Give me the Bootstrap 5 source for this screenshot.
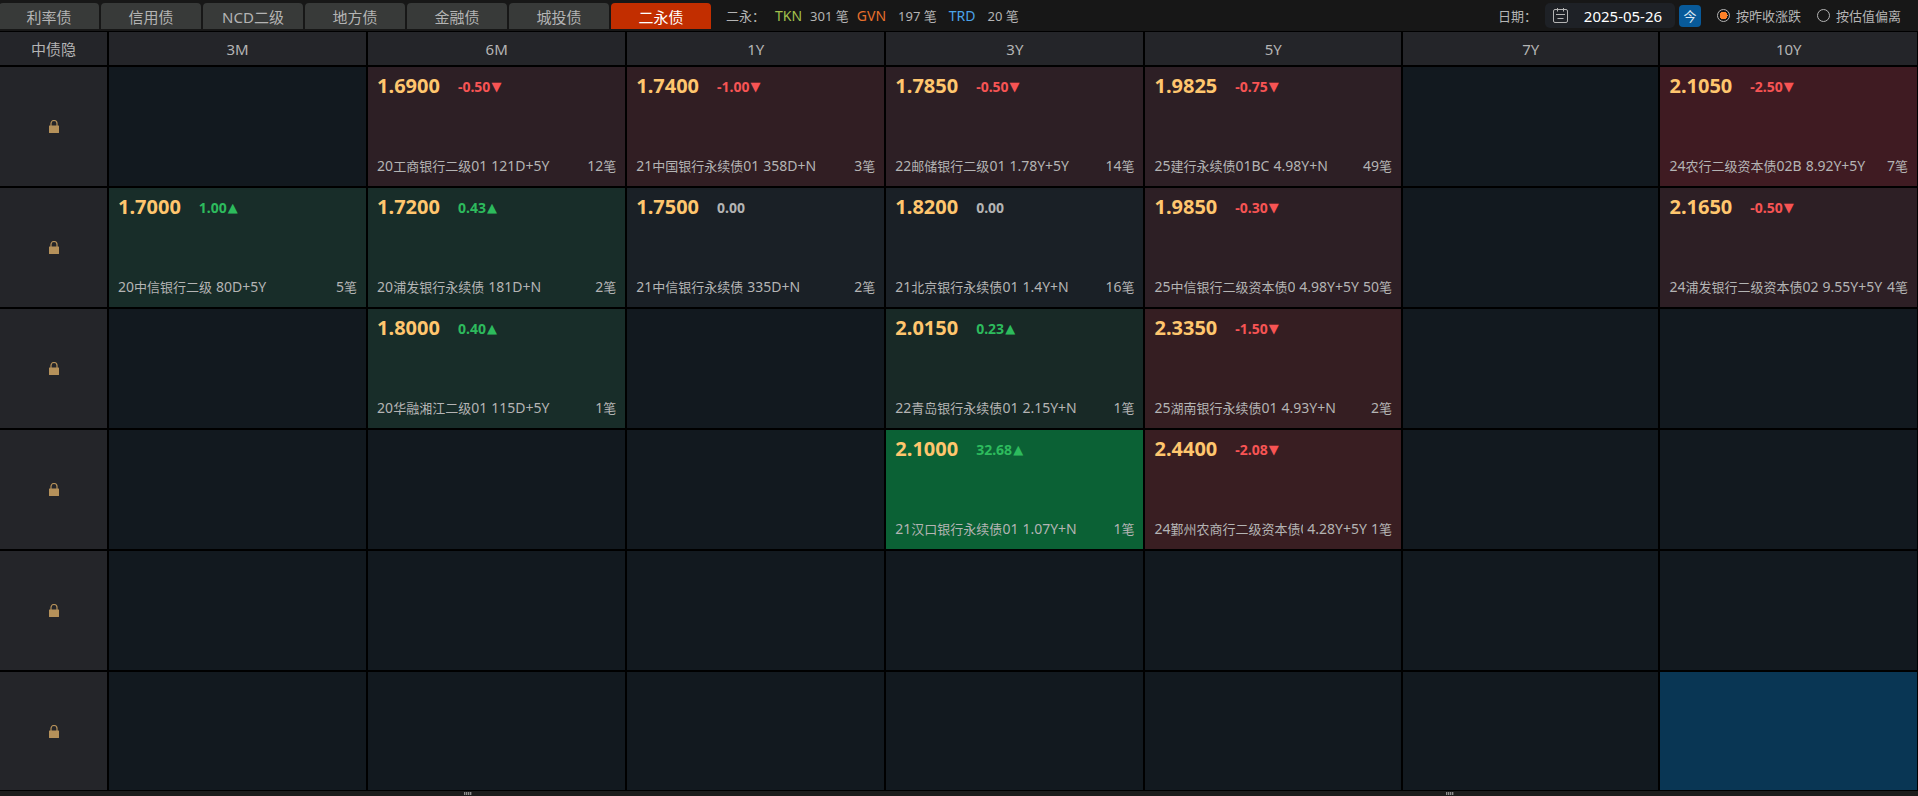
<!DOCTYPE html>
<html lang="zh-CN" data-bs-theme="dark">
<head>
<meta charset="utf-8">
<meta name="viewport" content="width=device-width, initial-scale=1">
<title>二永债</title>
<link href="https://cdn.jsdelivr.net/npm/bootstrap@5.3.0/dist/css/bootstrap.min.css" rel="stylesheet">
<style>
  body { background: #1c1c1c; color: #b4b4b4; font-family: "Noto Sans", "Noto Sans CJK SC", sans-serif; font-size: 13px; line-height: 20px; }
  .topbar { background: #171717; border-bottom: 1px solid #000; height: 32px; padding-right: 17px; }
  .market-tabs { gap: 2px; padding-top: 3px; margin-left: -1px; }
  .market-tabs .nav-link { width: 100px; height: 26px; padding: 2px 0 0; border: 0; border-radius: 4px 4px 0 0; background: #383a39; color: #b4b4b4; font-size: 15px; line-height: 24px; text-align: center; }
  .market-tabs .nav-link.active { background: #c22e00; color: #fff; }
  .stats { margin-left: 15px; }
  .stats-title { margin-right: 10px; }
  .tkn, .gvn, .trd { font-size: 14px; }
  .tkn { color: #a3c04c; } .gvn { color: #e8702c; } .trd { color: #4ba3e8; }
  .date-box { width: 130px; height: 25px; background: #1e2126; border-radius: 5px; padding: 0 8px; }
  .date-box input { width: 88px; border: 0; background: none; color: #fff; font-size: 15px; line-height: 20px; text-align: center; padding: 0; outline: 0; }
  .today { width: 22px; height: 22px; padding: 0; border: 0; border-radius: 4px; background: #085a9a; color: #dce8f2; font-size: 13px; line-height: 22px; }
  .mode { appearance: none; width: 13px; height: 13px; margin: 0 6px 0 0; border: 1px solid #b4b4b4; border-radius: 50%; }
  .mode:checked { background: radial-gradient(circle, #ff8228 0 4px, transparent 4px); }

  .matrix { table-layout: fixed; width: 100%; border-collapse: separate; border-spacing: 0; }
  .matrix th, .matrix td { padding: 0; border: 0 solid #000; border-width: 0 2px 2px 0; background: #12191f; }
  .matrix tr > :last-child { border-right-width: 1px; }
  .matrix thead th { background: #242529; height: 35px; font-size: 15px; font-weight: 400; text-align: center; }
  .matrix tbody th { background: #242529; }
  .first-col { width: 109px; }
  .near-col { width: 13.51%; }
  .tile { height: 119px; padding: 7px 9px 10px; }
  .matrix tbody tr:last-child .tile { height: 118px; }
  .matrix tbody tr:last-child > * { border-bottom-width: 1px; }
  .price { color: #ffc66e; font-size: 20px; line-height: 24px; font-weight: 700; margin-right: 18px; }
  .delta { font-size: 14px; line-height: 26px; font-weight: 700; }
  .arrow { font-family: "DejaVu Sans", sans-serif; font-size: 13px; font-weight: 400; line-height: 12px; margin-left: 1px; vertical-align: 1px; }
  .up { color: #2dbb5d; } .down { color: #f75454; }
  .deal { font-size: 14px; line-height: 20px; gap: 4px; }
  .zh { font-size: 13px; }
  .bond { min-width: 0; overflow: hidden; }
  .matrix .r1 { background: #2d1f25; } .matrix .r2 { background: #311e23; } .matrix .r3 { background: #351e22; }
  .matrix .r4 { background: #391e22; } .matrix .r5 { background: #3f1b22; }
  .matrix .g1 { background: #182926; } .matrix .g2 { background: #182d29; } .matrix .g9 { background: #0b6135; }
  .matrix .flat { background: #1a2026; } .matrix .picked { background: #093654; }
  .splitter { height: 5px; padding: 1px 24.2% 0; }
  .grip { width: 8px; height: 3px; background: repeating-linear-gradient(90deg, #8c8c8c 0 1px, #444 1px 2px); }
</style>
</head>
<body>
<header class="topbar d-flex align-items-stretch justify-content-between">
  <div class="d-flex">
    <nav class="nav market-tabs flex-nowrap">
      <button class="nav-link" type="button">利率债</button>
      <button class="nav-link" type="button">信用债</button>
      <button class="nav-link" type="button">NCD二级</button>
      <button class="nav-link" type="button">地方债</button>
      <button class="nav-link" type="button">金融债</button>
      <button class="nav-link" type="button">城投债</button>
      <button class="nav-link active" type="button">二永债</button>
    </nav>
    <div class="stats d-flex align-items-center text-nowrap">
      <span class="stats-title">二永：</span>
      <span class="tkn me-2">TKN</span><span class="me-2">301 笔</span>
      <span class="gvn me-2">GVN</span><span class="ms-1 me-2">197 笔</span>
      <span class="trd ms-1 me-2">TRD</span><span class="ms-1">20 笔</span>
    </div>
  </div>
  <div class="d-flex align-items-center text-nowrap">
    <label for="day" class="me-2">日期：</label>
    <div class="date-box d-flex align-items-center justify-content-between">
      <svg width="15" height="15" viewBox="0 0 15 15" fill="none" stroke="#b4b4b4"><rect x=".5" y="1.500" width="14" height="13" rx="1.500"/><path d="M4.500 0v3.500M10.500 0v3.500M3 6.500h9M4.500 10.500h6"/></svg>
      <input id="day" type="text" value="2025-05-26">
    </div>
    <button class="today ms-1 me-3" type="button">今</button>
    <input class="mode" type="radio" name="mode" id="m1" checked>
    <label class="me-3" for="m1">按昨收涨跌</label>
    <input class="mode" type="radio" name="mode" id="m2">
    <label for="m2">按估值偏离</label>
  </div>
</header>

<svg class="d-none"><symbol id="lock" viewBox="0 0 10 13"><path d="M2 6V3.500a3 3 0 0 1 6 0V6" fill="none" stroke="#b5915a" stroke-width="1.200"/><rect y="5.500" width="10" height="7.500" rx=".5" fill="#b5915a"/></symbol></svg>

<main>
<table class="matrix">
  <thead>
    <tr><th class="first-col" scope="col">中债隐</th><th class="near-col" scope="col">3M</th><th class="near-col" scope="col">6M</th><th class="near-col" scope="col">1Y</th><th class="near-col" scope="col">3Y</th><th scope="col">5Y</th><th scope="col">7Y</th><th scope="col">10Y</th></tr>
  </thead>
  <tbody>
    <tr>
      <th scope="row"><svg class="d-block mx-auto" width="10" height="13"><use href="#lock"/></svg></th>
      <td></td>
      <td class="r1"><div class="tile d-flex flex-column justify-content-between"><div class="d-flex"><span class="price">1.6900</span><span class="delta down">-0.50<span class="arrow">▼</span></span></div><div class="deal d-flex text-nowrap"><span class="bond">20<span class="zh">工商银行二级</span>01</span><span>121D+5Y</span><span class="ms-auto">12<span class="zh">笔</span></span></div></div></td>
      <td class="r2"><div class="tile d-flex flex-column justify-content-between"><div class="d-flex"><span class="price">1.7400</span><span class="delta down">-1.00<span class="arrow">▼</span></span></div><div class="deal d-flex text-nowrap"><span class="bond">21<span class="zh">中国银行永续债</span>01</span><span>358D+N</span><span class="ms-auto">3<span class="zh">笔</span></span></div></div></td>
      <td class="r1"><div class="tile d-flex flex-column justify-content-between"><div class="d-flex"><span class="price">1.7850</span><span class="delta down">-0.50<span class="arrow">▼</span></span></div><div class="deal d-flex text-nowrap"><span class="bond">22<span class="zh">邮储银行二级</span>01</span><span>1.78Y+5Y</span><span class="ms-auto">14<span class="zh">笔</span></span></div></div></td>
      <td class="r1"><div class="tile d-flex flex-column justify-content-between"><div class="d-flex"><span class="price">1.9825</span><span class="delta down">-0.75<span class="arrow">▼</span></span></div><div class="deal d-flex text-nowrap"><span class="bond">25<span class="zh">建行永续债</span>01BC</span><span>4.98Y+N</span><span class="ms-auto">49<span class="zh">笔</span></span></div></div></td>
      <td></td>
      <td class="r5"><div class="tile d-flex flex-column justify-content-between"><div class="d-flex"><span class="price">2.1050</span><span class="delta down">-2.50<span class="arrow">▼</span></span></div><div class="deal d-flex text-nowrap"><span class="bond">24<span class="zh">农行二级资本债</span>02B</span><span>8.92Y+5Y</span><span class="ms-auto">7<span class="zh">笔</span></span></div></div></td>
    </tr>
    <tr>
      <th scope="row"><svg class="d-block mx-auto" width="10" height="13"><use href="#lock"/></svg></th>
      <td class="g2"><div class="tile d-flex flex-column justify-content-between"><div class="d-flex"><span class="price">1.7000</span><span class="delta up">1.00<span class="arrow">▲</span></span></div><div class="deal d-flex text-nowrap"><span class="bond">20<span class="zh">中信银行二级</span></span><span>80D+5Y</span><span class="ms-auto">5<span class="zh">笔</span></span></div></div></td>
      <td class="g2"><div class="tile d-flex flex-column justify-content-between"><div class="d-flex"><span class="price">1.7200</span><span class="delta up">0.43<span class="arrow">▲</span></span></div><div class="deal d-flex text-nowrap"><span class="bond">20<span class="zh">浦发银行永续债</span></span><span>181D+N</span><span class="ms-auto">2<span class="zh">笔</span></span></div></div></td>
      <td class="flat"><div class="tile d-flex flex-column justify-content-between"><div class="d-flex"><span class="price">1.7500</span><span class="delta">0.00</span></div><div class="deal d-flex text-nowrap"><span class="bond">21<span class="zh">中信银行永续债</span></span><span>335D+N</span><span class="ms-auto">2<span class="zh">笔</span></span></div></div></td>
      <td class="flat"><div class="tile d-flex flex-column justify-content-between"><div class="d-flex"><span class="price">1.8200</span><span class="delta">0.00</span></div><div class="deal d-flex text-nowrap"><span class="bond">21<span class="zh">北京银行永续债</span>01</span><span>1.4Y+N</span><span class="ms-auto">16<span class="zh">笔</span></span></div></div></td>
      <td class="r1"><div class="tile d-flex flex-column justify-content-between"><div class="d-flex"><span class="price">1.9850</span><span class="delta down">-0.30<span class="arrow">▼</span></span></div><div class="deal d-flex text-nowrap"><span class="bond">25<span class="zh">中信银行二级资本债</span>0</span><span>4.98Y+5Y</span><span class="ms-auto">50<span class="zh">笔</span></span></div></div></td>
      <td></td>
      <td class="r1"><div class="tile d-flex flex-column justify-content-between"><div class="d-flex"><span class="price">2.1650</span><span class="delta down">-0.50<span class="arrow">▼</span></span></div><div class="deal d-flex text-nowrap"><span class="bond">24<span class="zh">浦发银行二级资本债</span>02</span><span>9.55Y+5Y</span><span class="ms-auto">4<span class="zh">笔</span></span></div></div></td>
    </tr>
    <tr>
      <th scope="row"><svg class="d-block mx-auto" width="10" height="13"><use href="#lock"/></svg></th>
      <td></td>
      <td class="g2"><div class="tile d-flex flex-column justify-content-between"><div class="d-flex"><span class="price">1.8000</span><span class="delta up">0.40<span class="arrow">▲</span></span></div><div class="deal d-flex text-nowrap"><span class="bond">20<span class="zh">华融湘江二级</span>01</span><span>115D+5Y</span><span class="ms-auto">1<span class="zh">笔</span></span></div></div></td>
      <td></td>
      <td class="g1"><div class="tile d-flex flex-column justify-content-between"><div class="d-flex"><span class="price">2.0150</span><span class="delta up">0.23<span class="arrow">▲</span></span></div><div class="deal d-flex text-nowrap"><span class="bond">22<span class="zh">青岛银行永续债</span>01</span><span>2.15Y+N</span><span class="ms-auto">1<span class="zh">笔</span></span></div></div></td>
      <td class="r3"><div class="tile d-flex flex-column justify-content-between"><div class="d-flex"><span class="price">2.3350</span><span class="delta down">-1.50<span class="arrow">▼</span></span></div><div class="deal d-flex text-nowrap"><span class="bond">25<span class="zh">湖南银行永续债</span>01</span><span>4.93Y+N</span><span class="ms-auto">2<span class="zh">笔</span></span></div></div></td>
      <td></td>
      <td></td>
    </tr>
    <tr>
      <th scope="row"><svg class="d-block mx-auto" width="10" height="13"><use href="#lock"/></svg></th>
      <td></td>
      <td></td>
      <td></td>
      <td class="g9"><div class="tile d-flex flex-column justify-content-between"><div class="d-flex"><span class="price">2.1000</span><span class="delta up">32.68<span class="arrow">▲</span></span></div><div class="deal d-flex text-nowrap"><span class="bond">21<span class="zh">汉口银行永续债</span>01</span><span>1.07Y+N</span><span class="ms-auto">1<span class="zh">笔</span></span></div></div></td>
      <td class="r4"><div class="tile d-flex flex-column justify-content-between"><div class="d-flex"><span class="price">2.4400</span><span class="delta down">-2.08<span class="arrow">▼</span></span></div><div class="deal d-flex text-nowrap"><span class="bond">24<span class="zh">鄞州农商行二级资本债</span>0</span><span>4.28Y+5Y</span><span class="ms-auto">1<span class="zh">笔</span></span></div></div></td>
      <td></td>
      <td></td>
    </tr>
    <tr>
      <th scope="row"><svg class="d-block mx-auto" width="10" height="13"><use href="#lock"/></svg></th>
      <td><div class="tile"></div></td><td></td><td></td><td></td><td></td><td></td><td></td>
    </tr>
    <tr>
      <th scope="row"><svg class="d-block mx-auto" width="10" height="13"><use href="#lock"/></svg></th>
      <td><div class="tile"></div></td><td></td><td></td><td></td><td></td><td></td><td class="picked"></td>
    </tr>
  </tbody>
</table>
</main>
<footer class="splitter d-flex justify-content-between"><span class="grip"></span><span class="grip"></span></footer>
<script src="https://cdn.jsdelivr.net/npm/bootstrap@5.3.0/dist/js/bootstrap.bundle.min.js"></script>
</body>
</html>
